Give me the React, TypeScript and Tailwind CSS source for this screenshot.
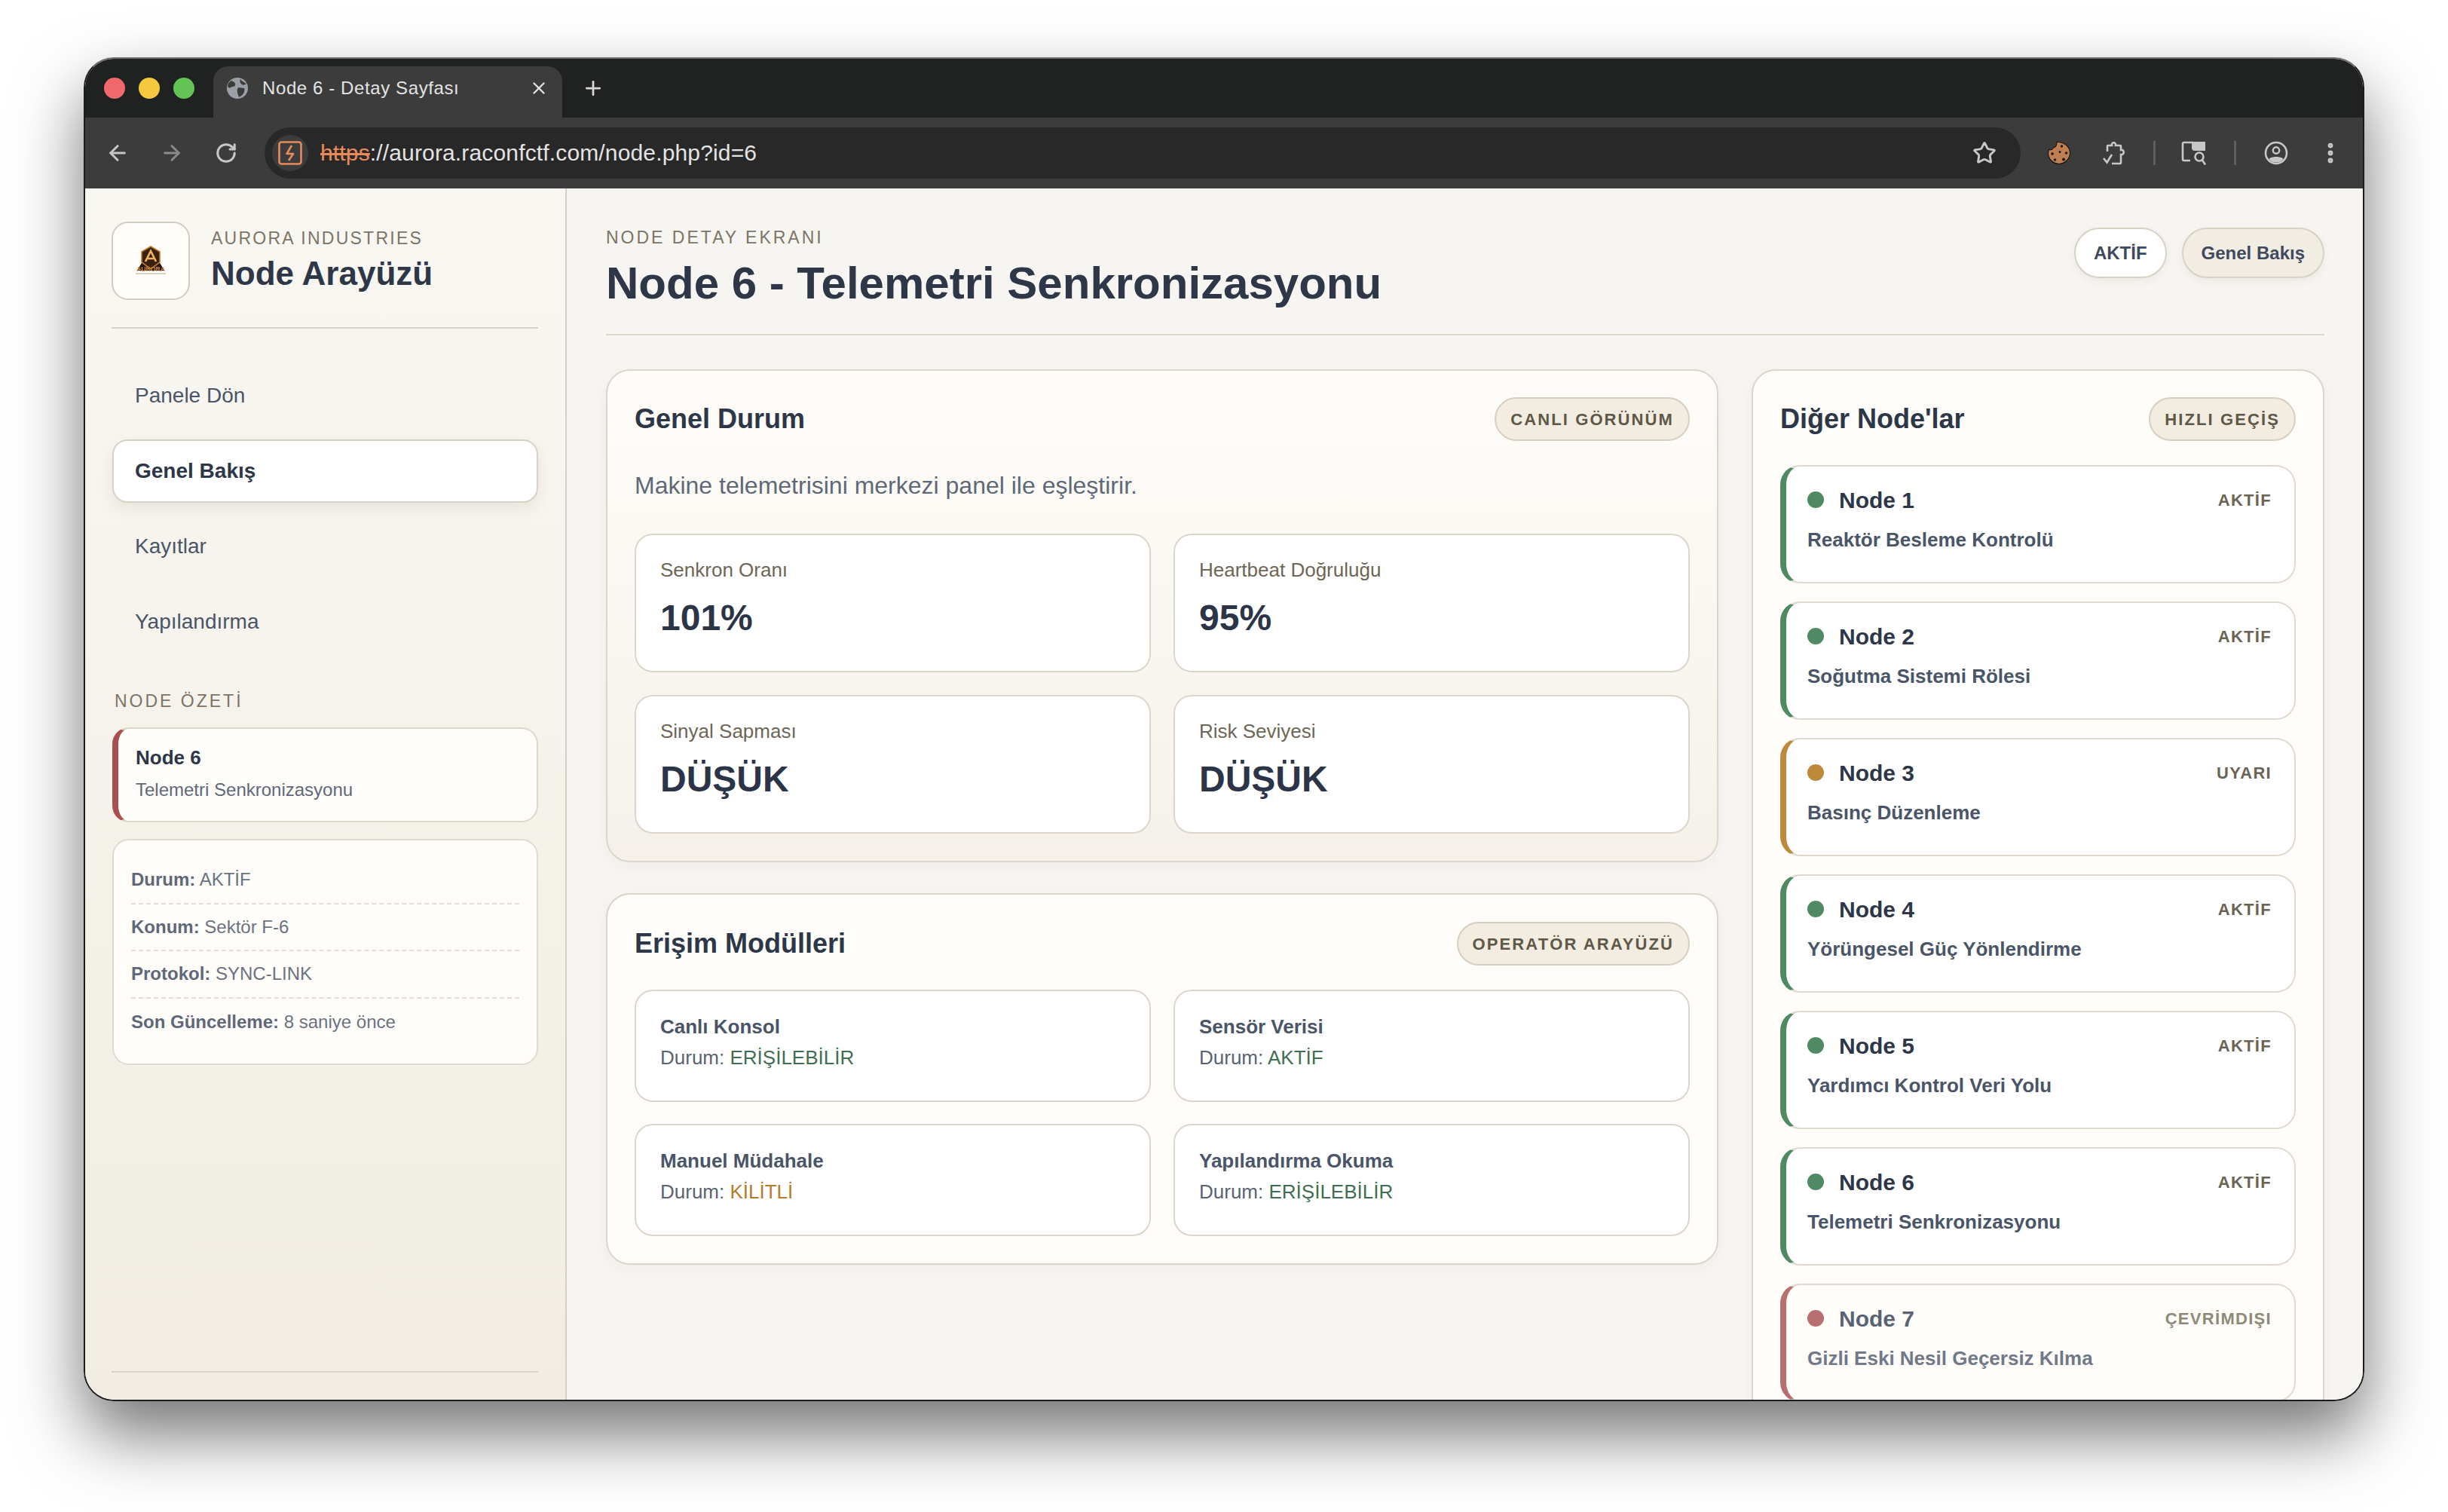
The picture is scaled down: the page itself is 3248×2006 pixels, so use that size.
import { ArrowLeft, ArrowRight, EllipsisVertical, Plus, RotateCw, Star, X } from "lucide-react";

type Tone = "green" | "amber" | "red";

const nodes: { name: string; desc: string; status: string; tone: Tone }[] = [
  { name: "Node 1", desc: "Reaktör Besleme Kontrolü", status: "AKTİF", tone: "green" },
  { name: "Node 2", desc: "Soğutma Sistemi Rölesi", status: "AKTİF", tone: "green" },
  { name: "Node 3", desc: "Basınç Düzenleme", status: "UYARI", tone: "amber" },
  { name: "Node 4", desc: "Yörüngesel Güç Yönlendirme", status: "AKTİF", tone: "green" },
  { name: "Node 5", desc: "Yardımcı Kontrol Veri Yolu", status: "AKTİF", tone: "green" },
  { name: "Node 6", desc: "Telemetri Senkronizasyonu", status: "AKTİF", tone: "green" },
  { name: "Node 7", desc: "Gizli Eski Nesil Geçersiz Kılma", status: "ÇEVRİMDIŞI", tone: "red" },
];

const stats = [
  { label: "Senkron Oranı", value: "101%" },
  { label: "Heartbeat Doğruluğu", value: "95%" },
  { label: "Sinyal Sapması", value: "DÜŞÜK" },
  { label: "Risk Seviyesi", value: "DÜŞÜK" },
];

const modules = [
  { name: "Canlı Konsol", state: "ERİŞİLEBİLİR", color: "text-[#3f6e50]" },
  { name: "Sensör Verisi", state: "AKTİF", color: "text-[#3f6e50]" },
  { name: "Manuel Müdahale", state: "KİLİTLİ", color: "text-[#b57b2c]" },
  { name: "Yapılandırma Okuma", state: "ERİŞİLEBİLİR", color: "text-[#3f6e50]" },
];

const info = [
  { key: "Durum:", value: "AKTİF" },
  { key: "Konum:", value: "Sektör F-6" },
  { key: "Protokol:", value: "SYNC-LINK" },
  { key: "Son Güncelleme:", value: "8 saniye önce" },
];

function AuroraLogo() {
  return (
    <svg viewBox="0 0 44 40" className="h-[40px] w-[44px]">
      <path d="M4 33 L15 14 H29 L40 33 Z" fill="#1d1410" />
      <path d="M22 1 L34 8 V22 L22 31 L10 22 V8 Z" fill="#3a2212" stroke="#c17a2e" strokeWidth="1.6" />
      <path d="M15 21 L22 7 L29 21 M18 17 H26" fill="none" stroke="#f0b264" strokeWidth="2.6" />
      <text x="22" y="33.5" textAnchor="middle" fontSize="8.6" fontWeight="700" fill="#c88a3f" fontFamily="'Liberation Sans', sans-serif">
        AURORA
      </text>
      <path d="M2 37 H42" stroke="#a98a62" strokeWidth="0.8" />
    </svg>
  );
}

function GlobeIcon() {
  return (
    <svg viewBox="0 0 28 28" className="h-[28px] w-[28px] shrink-0">
      <circle cx="14" cy="14" r="14" fill="#9aa0a6" />
      <path d="M6 4 C10 6 12 7 11 10 C10 13 6 11 4 14 L1 12 C1 8 3 6 6 4 Z" fill="#3c3c3c" />
      <path d="M15 13 L23 14 C25 18 21 24 16 26 C15 22 12 18 15 13 Z" fill="#3c3c3c" />
      <path d="M18 2 C20 5 23 6 26 8 L22 10 C19 9 16 6 18 2 Z" fill="#3c3c3c" />
    </svg>
  );
}

function SiteIcon() {
  return (
    <svg viewBox="0 0 32 32" className="h-[32px] w-[32px]">
      <rect x="1.5" y="1.5" width="29" height="29" rx="3" fill="none" stroke="#e98a5b" strokeWidth="2.6" />
      <path d="M18 6 L11.5 17 H20 L14 26" fill="none" stroke="#e98a5b" strokeWidth="2.6" strokeLinejoin="round" />
    </svg>
  );
}

function CookieIcon() {
  return (
    <svg viewBox="0 0 32 32" className="h-[32px] w-[32px]">
      <path
        d="M13 1.5 C23 1 30.5 8 30.5 16 C30.5 24 23 30.5 16 30.5 C8 30.5 1.5 24 1.5 16 C1.5 14 2 12.5 3 11 C5 12.5 8 11.5 8 9 C11 9 13 6.5 13 1.5 Z"
        fill="#c07f52"
        stroke="#111"
        strokeWidth="1.1"
      />
      <circle cx="19.5" cy="7" r="1.7" fill="#1d1410" />
      <circle cx="7" cy="17" r="1.8" fill="#1d1410" />
      <circle cx="25.5" cy="16" r="1.8" fill="#1d1410" />
      <circle cx="10.5" cy="25" r="1.8" fill="#1d1410" />
      <circle cx="22" cy="24.5" r="2" fill="#1d1410" />
      <circle cx="17" cy="14.5" r="1.5" fill="#1d1410" />
    </svg>
  );
}

function ExtensionIcon() {
  return (
    <svg viewBox="0 0 32 32" className="h-[32px] w-[32px]" fill="none" stroke="#c7c7c7" strokeWidth="2.6">
      <path d="M7 14 V7 a1 1 0 0 1 1 -1 H13 C12 1 19 1 18 6 H24 a1 1 0 0 1 1 1 V12 C30 11 30 19 25 18 V29 a1 1 0 0 1 -1 1 H13" />
      <path d="M2 23 L6.5 28.5 L13 18" />
    </svg>
  );
}

function TabSearchIcon() {
  return (
    <svg viewBox="0 0 34 34" className="h-[34px] w-[34px]" fill="none" stroke="#c7c7c7" strokeWidth="2.6">
      <path d="M16 3 H4 a2 2 0 0 0 -2 2 V25 a2 2 0 0 0 2 2 H12" />
      <path d="M14 2 H31 a1 1 0 0 1 1 1 V14 H18 a4 4 0 0 1 -4 -4 Z" fill="#c7c7c7" stroke="none" />
      <circle cx="24" cy="22" r="5.5" />
      <path d="M28 26.5 L32 32.5" />
    </svg>
  );
}

function ProfileIcon() {
  return (
    <svg viewBox="0 0 32 32" className="h-[32px] w-[32px]">
      <circle cx="16" cy="16" r="14" fill="none" stroke="#c7c7c7" strokeWidth="2.6" />
      <circle cx="16" cy="12.5" r="4.2" fill="none" stroke="#c7c7c7" strokeWidth="2.4" />
      <path d="M6.5 24 C9 20 23 20 25.5 24 C22 30 10 30 6.5 24 Z" fill="#c7c7c7" />
    </svg>
  );
}

function Badge({ children }: { children: string }) {
  return (
    <span className="flex h-[58px] items-center rounded-full border-2 border-[#d8cfbf] bg-[#f2ece1] px-[19px] text-[22px] font-bold tracking-[2.1px] text-[#5f5847]">
      {children}
    </span>
  );
}

function Chrome() {
  return (
    <div className="shrink-0">
      <div className="flex h-[78px] items-end bg-[#202221] pl-[25px]">
        <div className="mb-[25px] flex gap-[18px]">
          <span className="h-[28px] w-[28px] rounded-full bg-[#f0696c]" />
          <span className="h-[28px] w-[28px] rounded-full bg-[#f5c93f]" />
          <span className="h-[28px] w-[28px] rounded-full bg-[#62c554]" />
        </div>
        <div className="ml-[25px] flex h-[68px] w-[463px] items-center rounded-t-[20px] bg-[#3c3c3c] pb-[10px] pl-[18px] pr-[18px]">
          <GlobeIcon />
          <span className="ml-[19px] flex-1 text-[24px] tracking-[0.6px] text-[#e3e3e3]">Node 6 - Detay Sayfası</span>
          <X size={26} color="#e3e3e3" strokeWidth={2.2} />
        </div>
        <div className="mb-[24px] ml-[26px]">
          <Plus size={30} color="#d6d6d6" strokeWidth={2.2} />
        </div>
      </div>
      <div className="flex h-[94px] items-center bg-[#3c3c3c] pl-[27px] pr-[26px]">
        <ArrowLeft size={32} color="#c7c7c7" strokeWidth={2.2} />
        <ArrowRight size={32} color="#8a8a8a" strokeWidth={2.2} className="ml-[40px]" />
        <RotateCw size={30} color="#c7c7c7" strokeWidth={2.4} className="ml-[41px]" />
        <div className="ml-[36px] flex h-[68px] flex-1 items-center rounded-full bg-[#282828] pl-[10px] pr-[32px]">
          <span className="flex h-[48px] w-[48px] items-center justify-center rounded-full bg-[#3c3c3c]">
            <SiteIcon />
          </span>
          <span className="ml-[16px] flex-1 pb-[2px] text-[30px] tracking-[0.15px] text-[#e3e3e3]">
            <span className="text-[#e98a5b] line-through">https</span>://aurora.raconfctf.com/node.php?id=6
          </span>
          <Star size={32} color="#c7c7c7" strokeWidth={2.2} />
        </div>
        <div className="ml-[35px] flex items-center">
          <CookieIcon />
          <span className="ml-[41px]">
            <ExtensionIcon />
          </span>
          <span className="ml-[36px] h-[32px] w-[3px] bg-[#5e5e5e]" />
          <span className="ml-[34px]">
            <TabSearchIcon />
          </span>
          <span className="ml-[36px] h-[32px] w-[3px] bg-[#5e5e5e]" />
          <span className="ml-[37px]">
            <ProfileIcon />
          </span>
          <EllipsisVertical size={34} color="#c7c7c7" strokeWidth={2.8} className="ml-[39px]" />
        </div>
      </div>
    </div>
  );
}

function Sidebar() {
  return (
    <aside className="flex w-[639px] shrink-0 flex-col border-r-2 border-[#d5d0c5] bg-gradient-to-b from-[#f9f7f2] to-[#f1ede3] pb-[36px] pl-[35px] pr-[36px] pt-[44px]">
      <div className="flex items-center gap-[28px] border-b-2 border-[#d8d2c4] pb-[36px]">
        <div className="flex h-[104px] w-[104px] items-center justify-center rounded-[22px] border-2 border-[#d3ccc0] bg-[#fefdfa]">
          <AuroraLogo />
        </div>
        <div>
          <div className="text-[23px] leading-[28px] tracking-[2.25px] text-[#7c7464]">AURORA INDUSTRIES</div>
          <div className="mt-[6px] text-[44px] font-bold leading-[54px] text-[#2d3748]">Node Arayüzü</div>
        </div>
      </div>

      <nav className="mt-[47px] flex flex-col gap-[16px] pl-[1px]">
        <a className="flex h-[84px] items-center pl-[30px] text-[28px] text-[#4a5568]">Panele Dön</a>
        <a className="flex h-[84px] items-center rounded-[20px] border-2 border-[#d8d2c4] bg-white pl-[28px] text-[28px] font-bold text-[#2d3748] shadow-[0_8px_20px_rgba(60,50,30,0.08)]">
          Genel Bakış
        </a>
        <a className="flex h-[84px] items-center pl-[30px] text-[28px] text-[#4a5568]">Kayıtlar</a>
        <a className="flex h-[84px] items-center pl-[30px] text-[28px] text-[#4a5568]">Yapılandırma</a>
      </nav>

      <div className="ml-[4px] mt-[49px] text-[23px] leading-[28px] tracking-[3px] text-[#7c7464]">NODE ÖZETİ</div>

      <div className="ml-[1px] mt-[21px] h-[126px] rounded-[22px] border-2 border-l-8 border-[#ddd7ca] border-l-[#a94f4f] bg-[#fefdfa] pl-[23px] pt-[22px]">
        <div className="text-[26px] font-bold leading-[32px] text-[#2d3748]">Node 6</div>
        <div className="mt-[12px] text-[24px] leading-[30px] text-[#5f6878]">Telemetri Senkronizasyonu</div>
      </div>

      <div className="ml-[1px] mt-[22px] h-[300px] rounded-[22px] border-2 border-[#e0dace] bg-[#fefdfa] px-[23px] pt-[22px]">
        {info.map((row, i) => (
          <div
            key={row.key}
            className={`flex h-[62.5px] items-center text-[24px] text-[#6a7280] ${i < 3 ? "border-b-2 border-dashed border-[#e4dfd4]" : ""}`}
          >
            <span>
              <b className="font-bold text-[#5f6878]">{row.key}</b> {row.value}
            </span>
          </div>
        ))}
      </div>

      <div className="mt-auto border-t-2 border-[#d8d2c4]" />
    </aside>
  );
}

function StatCard({ label, value }: { label: string; value: string }) {
  return (
    <div className="h-[184px] rounded-[24px] border-2 border-[#dcd6ca] bg-white pl-[32px] pt-[31px]">
      <div className="text-[26px] leading-[30px] text-[#6e6655]">{label}</div>
      <div className="mt-[21px] text-[48px] font-bold leading-[56px] text-[#2b3547]">{value}</div>
    </div>
  );
}

function ModuleCard({ name, state, color }: { name: string; state: string; color: string }) {
  return (
    <div className="h-[149px] rounded-[24px] border-2 border-[#dcd6ca] bg-white pl-[32px] pt-[32px]">
      <div className="text-[26px] font-bold leading-[30px] text-[#4a5568]">{name}</div>
      <div className="mt-[11px] text-[26px] leading-[30px] text-[#5a6374]">
        Durum: <span className={color}>{state}</span>
      </div>
    </div>
  );
}

function NodeRow({ name, desc, status, tone }: { name: string; desc: string; status: string; tone: Tone }) {
  const border =
    tone === "green" ? "border-l-[#4f8a63]" : tone === "amber" ? "border-l-[#bd8a3c]" : "border-l-[#b86f6f]";
  const dot = tone === "green" ? "bg-[#4f8a63]" : tone === "amber" ? "bg-[#bd8a3c]" : "bg-[#b86f6f]";
  const off = tone === "red";
  return (
    <div className={`h-[157px] shrink-0 rounded-[26px] border-2 border-l-8 border-[#e0dace] ${border} ${off ? "bg-[#fefdfa]" : "bg-white"} pl-[28px] pr-[30px] pt-[26px]`}>
      <div className="flex h-[36px] items-center">
        <span className={`h-[22px] w-[22px] rounded-full ${dot}`} />
        <span className={`ml-[20px] flex-1 text-[30px] font-bold ${off ? "text-[#5a6374]" : "text-[#2d3748]"}`}>{name}</span>
        <span className={`text-[22px] font-bold tracking-[1.3px] ${off ? "text-[#8f8a78]" : "text-[#6b6353]"}`}>{status}</span>
      </div>
      <div className={`mt-[20px] text-[26px] font-bold leading-[30px] ${off ? "text-[#717989]" : "text-[#4a5568]"}`}>{desc}</div>
    </div>
  );
}

function Main() {
  return (
    <main className="min-w-0 flex-1 overflow-hidden bg-[#f6f5f1] pl-[52px] pr-[51px] pt-[51px]">
      <header className="flex items-start justify-between border-b-2 border-[#dcd6ca] pb-[33px]">
        <div>
          <div className="text-[23px] leading-[28px] tracking-[3px] text-[#7c7464]">NODE DETAY EKRANI</div>
          <h1 className="mt-[13px] text-[60px] font-bold leading-[68px] text-[#2d3748]">Node 6 - Telemetri Senkronizasyonu</h1>
        </div>
        <div className="flex gap-[20px] pt-[1px]">
          <span className="flex h-[67px] items-center rounded-full border-2 border-[#d8d2c4] bg-white px-[24px] text-[24px] font-bold text-[#3f4a5e] shadow-[0_4px_12px_rgba(60,50,30,0.06)]">
            AKTİF
          </span>
          <span className="flex h-[67px] items-center rounded-full border-2 border-[#d8d2c4] bg-[#f1ede3] px-[24px] text-[24px] font-bold text-[#3f4a5e] shadow-[0_4px_12px_rgba(60,50,30,0.06)]">
            Genel Bakış
          </span>
        </div>
      </header>

      <div className="mt-[45px] grid grid-cols-[1476px_760px] items-start gap-x-[44px]">
        <div className="flex flex-col gap-[41px]">
          <section className="rounded-[32px] border-2 border-[#dcd6ca] bg-gradient-to-b from-[#fefdf9] to-[#f5f1ea] px-[36px] pb-[36px] pt-[35px] shadow-[0_6px_20px_rgba(60,50,30,0.04)]">
            <div className="flex items-center justify-between">
              <h2 className="text-[36px] font-bold text-[#2d3748]">Genel Durum</h2>
              <Badge>CANLI GÖRÜNÜM</Badge>
            </div>
            <p className="mt-[42px] text-[32px] leading-[34px] text-[#5f6878]">Makine telemetrisini merkezi panel ile eşleştirir.</p>
            <div className="mt-[47px] grid grid-cols-2 gap-[30px]">
              {stats.map((s) => (
                <StatCard key={s.label} label={s.label} value={s.value} />
              ))}
            </div>
          </section>

          <section className="rounded-[32px] border-2 border-[#dcd6ca] bg-[#fefdfa] px-[36px] pb-[36px] pt-[36px] shadow-[0_6px_20px_rgba(60,50,30,0.04)]">
            <div className="flex items-center justify-between">
              <h2 className="text-[36px] font-bold text-[#2d3748]">Erişim Modülleri</h2>
              <Badge>OPERATÖR ARAYÜZÜ</Badge>
            </div>
            <div className="mt-[32px] grid grid-cols-2 gap-[30px] gap-y-[29px]">
              {modules.map((m) => (
                <ModuleCard key={m.name} name={m.name} state={m.state} color={m.color} />
              ))}
            </div>
          </section>
        </div>

        <section className="rounded-[32px] border-2 border-[#dcd6ca] bg-[#fefdfa] px-[36px] pb-[36px] pt-[35px] shadow-[0_6px_20px_rgba(60,50,30,0.04)]">
          <div className="flex items-center justify-between">
            <h2 className="text-[36px] font-bold text-[#2d3748]">Diğer Node'lar</h2>
            <Badge>HIZLI GEÇİŞ</Badge>
          </div>
          <div className="mt-[32px] flex flex-col gap-[24px]">
            {nodes.map((n) => (
              <NodeRow key={n.name} name={n.name} desc={n.desc} status={n.status} tone={n.tone} />
            ))}
          </div>
        </section>
      </div>
    </main>
  );
}

export default function App() {
  return (
    <div className="h-[2006px] w-[3248px] overflow-hidden bg-white pl-[111px] pt-[76px] font-['Liberation_Sans',Arial,sans-serif]">
      <div className="flex h-[1783px] w-[3026px] flex-col overflow-hidden rounded-[40px] border-2 border-[#1c1c1c] border-t-[#6f6f6f] shadow-[0_44px_90px_rgba(0,0,0,0.55)]">
        <Chrome />
        <div className="flex min-h-0 flex-1">
          <Sidebar />
          <Main />
        </div>
      </div>
    </div>
  );
}
